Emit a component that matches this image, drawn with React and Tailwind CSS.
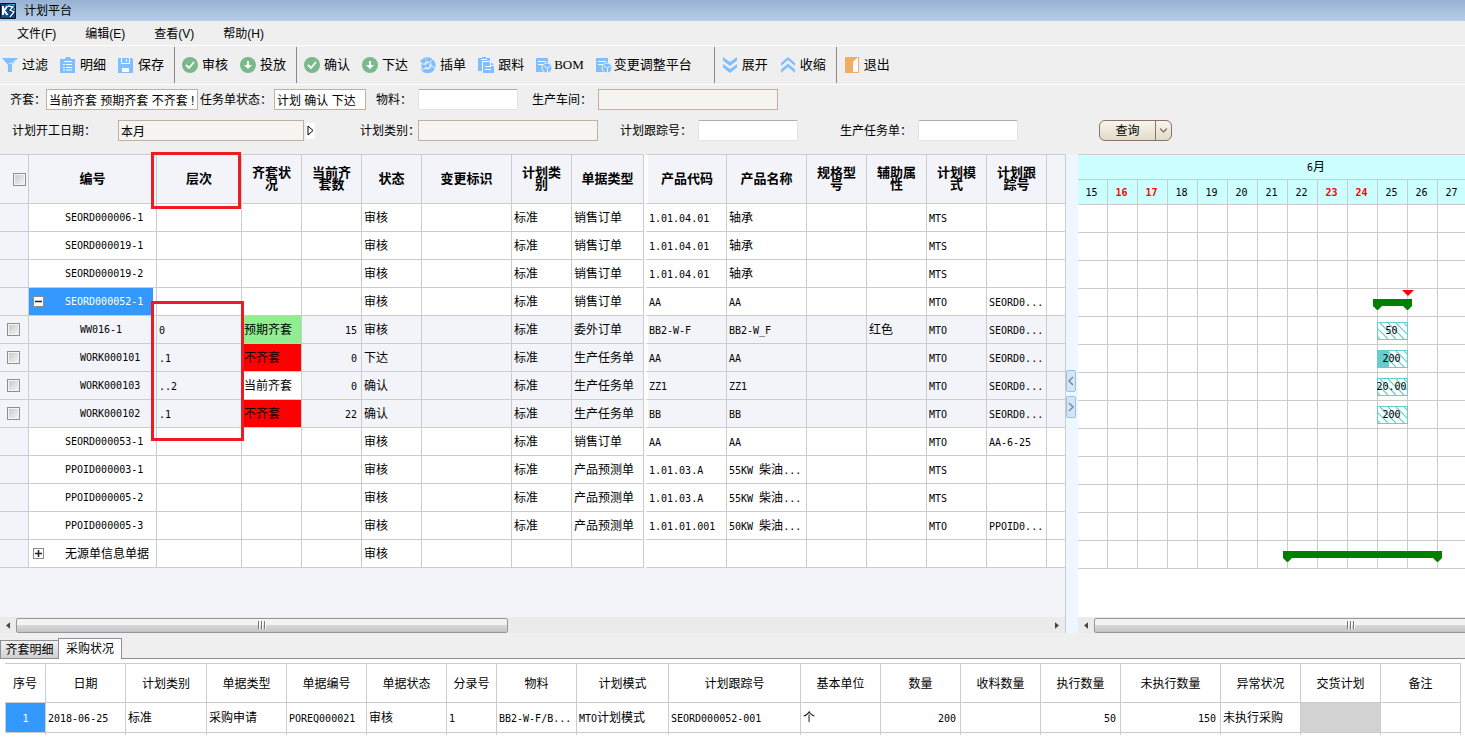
import React, { useState } from "react";
import clsx from "clsx";

const menus = ["文件(F)", "编辑(E)", "查看(V)", "帮助(H)"];

const planColumns = [
  { title: "层次", width: "w-[85px]" },
  { title: "齐套状况", width: "w-[60px]" },
  { title: "当前齐套数", width: "w-[60px]" },
  { title: "状态", width: "w-[60px]" },
  { title: "变更标识", width: "w-[90px]" },
  { title: "计划类别", width: "w-[60px]" },
  { title: "单据类型", width: "w-[72px]" },
  { title: "产品代码", width: "w-[83px]" },
  { title: "产品名称", width: "w-[80px]" },
  { title: "规格型号", width: "w-[60px]" },
  { title: "辅助属性", width: "w-[60px]" },
  { title: "计划模式", width: "w-[60px]" },
  { title: "计划跟踪号", width: "w-[60px]" },
  { title: "", width: "" },
];

// cells follow the order of planColumns
const planRows = [
  { id: "SEORD000006-1", cells: ["", "", "", "审核", "", "标准", "销售订单", "1.01.04.01", "轴承", "", "", "MTS", "", ""] },
  { id: "SEORD000019-1", cells: ["", "", "", "审核", "", "标准", "销售订单", "1.01.04.01", "轴承", "", "", "MTS", "", ""] },
  { id: "SEORD000019-2", cells: ["", "", "", "审核", "", "标准", "销售订单", "1.01.04.01", "轴承", "", "", "MTS", "", ""] },
  { id: "SEORD000052-1", toggle: "minus", selected: true, cells: ["", "", "", "审核", "", "标准", "销售订单", "AA", "AA", "", "", "MTO", "SEORD0...", ""] },
  { id: "WW016-1", child: true, kit: "bg-[#90ee90]", cells: ["0", "预期齐套", "15", "审核", "", "标准", "委外订单", "BB2-W-F", "BB2-W_F", "", "红色", "MTO", "SEORD0...", ""] },
  { id: "WORK000101", child: true, kit: "bg-[#ff0000]", cells: [".1", "不齐套", "0", "下达", "", "标准", "生产任务单", "AA", "AA", "", "", "MTO", "SEORD0...", ""] },
  { id: "WORK000103", child: true, kit: "bg-white", cells: ["..2", "当前齐套", "0", "确认", "", "标准", "生产任务单", "ZZ1", "ZZ1", "", "", "MTO", "SEORD0...", ""] },
  { id: "WORK000102", child: true, kit: "bg-[#ff0000]", cells: [".1", "不齐套", "22", "确认", "", "标准", "生产任务单", "BB", "BB", "", "", "MTO", "SEORD0...", ""] },
  { id: "SEORD000053-1", cells: ["", "", "", "审核", "", "标准", "销售订单", "AA", "AA", "", "", "MTO", "AA-6-25", ""] },
  { id: "PPOID000003-1", cells: ["", "", "", "审核", "", "标准", "产品预测单", "1.01.03.A", "55KW 柴油...", "", "", "MTS", "", ""] },
  { id: "PPOID000005-2", cells: ["", "", "", "审核", "", "标准", "产品预测单", "1.01.03.A", "55KW 柴油...", "", "", "MTS", "", ""] },
  { id: "PPOID000005-3", cells: ["", "", "", "审核", "", "标准", "产品预测单", "1.01.01.001", "50KW 柴油...", "", "", "MTO", "PPOID0...", ""] },
  { id: "无源单信息单据", toggle: "plus", cells: ["", "", "", "审核", "", "", "", "", "", "", "", "", "", ""] },
];

const days = [15, 16, 17, 18, 19, 20, 21, 22, 23, 24, 25, 26, 27];
const weekend = [16, 17, 23, 24];

const purchaseColumns = [
  { title: "序号", width: "w-[41px]", value: "1" },
  { title: "日期", width: "w-[80px]", value: "2018-06-25" },
  { title: "计划类别", width: "w-[81px]", value: "标准" },
  { title: "单据类型", width: "w-[80px]", value: "采购申请" },
  { title: "单据编号", width: "w-[80px]", value: "POREQ000021" },
  { title: "单据状态", width: "w-[80px]", value: "审核" },
  { title: "分录号", width: "w-[50px]", value: "1" },
  { title: "物料", width: "w-[80px]", value: "BB2-W-F/B..." },
  { title: "计划模式", width: "w-[92px]", value: "MTO计划模式" },
  { title: "计划跟踪号", width: "w-[132px]", value: "SEORD000052-001" },
  { title: "基本单位", width: "w-[80px]", value: "个" },
  { title: "数量", width: "w-[80px]", value: "200", right: true },
  { title: "收料数量", width: "w-[80px]", value: "" },
  { title: "执行数量", width: "w-[80px]", value: "50", right: true },
  { title: "未执行数量", width: "w-[100px]", value: "150", right: true },
  { title: "异常状况", width: "w-[80px]", value: "未执行采购" },
  { title: "交货计划", width: "w-[80px]", value: "", disabled: true },
  { title: "备注", width: "w-[80px]", value: "" },
];

// Latin runs are set in a 6px-wide mono face beside the 12px Chinese text
function Txt({ children }) {
  return String(children)
    .split(/([\x20-\x7e]+)/)
    .filter(Boolean)
    .map((part, i) =>
      /^[\x20-\x7e]+$/.test(part) ? (
        <span key={i} className="font-['DejaVu_Sans_Mono',monospace] text-[10px] whitespace-pre">
          {part}
        </span>
      ) : (
        part
      )
    );
}

function Logo() {
  return (
    <svg width="16" height="16" viewBox="0 0 16 16" aria-hidden="true">
      <rect width="16" height="16" rx="1" fill="#0a0a1e" />
      <rect x="1" y="1" width="14" height="14" fill="#0b4f8c" />
      <path d="M7 1h8v9z" fill="#29a9e0" />
      <path d="M3 3v9M7.500 3L4 7.500 7.500 12" stroke="#fff" strokeWidth="2" fill="none" />
      <path d="M8 3l5 1-3 3 4 2-4 5" stroke="#062a55" strokeWidth="3.200" fill="none" />
      <path d="M8 3l5 1-3 3 4 2-4 5" stroke="#fff" strokeWidth="1.300" fill="none" />
    </svg>
  );
}

const blue = "#80bfff";
const green = "#7ab98b";

const icons = {
  filter: (
    <>
      <path d="M0 1h16L10 8v7H6V8z" fill={blue} />
      <path d="M14 3l-5 4-2-1" stroke="#efefef" fill="none" />
    </>
  ),
  detail: (
    <>
      <path d="M0 2h5V1h1V0h4v1h1v1h4v14H0z" fill={blue} />
      <path d="M4 4.500h8M3 7.500h2M6 7.500h6M3 10.500h2M6 10.500h6M3 13h2M6 13h6" stroke="#fff" />
    </>
  ),
  save: (
    <>
      <path d="M0 1h14l1 1v14H0z" fill={blue} />
      <path d="M3.500 1v5.500h8V1M8.500 2v3" stroke="#fff" fill="none" />
      <path d="M4 11h7v4H4z" fill="#fff" />
    </>
  ),
  check: (
    <>
      <circle cx="8" cy="8" r="8" fill={green} />
      <path d="M4 8l3 3 5-6" stroke="#fff" strokeWidth="1.800" fill="none" />
    </>
  ),
  down: (
    <>
      <circle cx="8" cy="8" r="8" fill={green} />
      <path d="M7 4h2v4h3l-4 4-4-4h3z" fill="#fff" />
    </>
  ),
  insert: (
    <>
      <path d="M6 2.500a6 6 0 1 1-3.500 9" stroke={blue} strokeWidth="4" fill="none" />
      <path d="M0 4l5-4 1 5-3 2zM1 6l5 1 4-2-1 6-3-1-4 2z" fill={blue} />
      <path d="M0 6.500l6 1M6 10.500l-4 3M10 5l3-3M12 9l3 2" stroke="#efefef" />
    </>
  ),
  follow: (
    <>
      <path d="M0 1h4V0h4v1h4v3H5v10H0z" fill={blue} />
      <path d="M3 2.500h6M4.500 15V4.500H12" stroke="#fff" fill="none" />
      <path d="M5 5h8l3 3v8H5z" fill={blue} />
      <path d="M12.500 5v3.500H16M7 9.500h6M7 12.500h6" stroke="#fff" fill="none" />
    </>
  ),
  bom: (
    <>
      <path d="M0 1h12v12H9v2H0z" fill={blue} />
      <path d="M2 4.500h8M2 7.500h5" stroke="#fff" />
      <circle cx="11" cy="11" r="5" fill={blue} stroke="#efefef" />
      <path d="M8 9l3.500 2v5M11.500 11l3-2" stroke="#efefef" fill="none" />
    </>
  ),
  expand: (
    <path d="M1 0l7 5 7-5v3.500L8 9 1 3.500zM1 7l7 5 7-5v3.500L8 16l-7-5.500z" fill={blue} />
  ),
  collapse: (
    <path d="M1 9l7-6 7 6V6L8 0 1 6zM1 16l7-6 7 6v-3.500L8 6.500l-7 6z" fill={blue} />
  ),
  exit: (
    <>
      <path d="M1 0h14v16H1z" fill="#f0ac62" />
      <path d="M9 5l4-4h1v14H9z" fill="#fff" />
    </>
  ),
};

function Tool({ icon, label, serif }) {
  return (
    <button
      type="button"
      className={clsx("flex items-center text-[13px] leading-4 whitespace-nowrap", icon === "bom" ? "gap-0.5" : "gap-1")}
    >
      <svg width="16" height="16" viewBox="0 0 16 16" aria-hidden="true">
        {icons[icon]}
      </svg>
      <span className={clsx(serif && "font-['Liberation_Serif',serif]")}>{label}</span>
    </button>
  );
}

const Separator = () => <div className="h-9 w-px bg-[#8a8a8a]" />;

function Field({ id, label, labelWidth, width, value = "", look = "plain" }) {
  return (
    <div className="flex items-center">
      <label htmlFor={id} className={clsx("whitespace-nowrap", labelWidth)}>
        {label}
      </label>
      <input
        id={id}
        type="text"
        defaultValue={value}
        className={clsx(
          "h-[21px] border px-0.5 outline-none",
          width,
          look === "plain" && "rounded-xs border-[#e2e3ea] border-t-[#abadb3] bg-white",
          look === "pick" && "border-[#bfb0a3] bg-white",
          look === "locked" && "border-[#bfb0a3] bg-[#f6f4f0]"
        )}
      />
    </div>
  );
}

function Tick({ label }) {
  return (
    <input
      type="checkbox"
      aria-label={label}
      className="block size-[13px] appearance-none border border-[#8e8f8f] bg-linear-to-br from-[#c4c8cd] to-[#f6f6f6] shadow-[inset_0_0_0_1px_#f4f4f4] checked:bg-[#3399ff]"
    />
  );
}

function Toggle({ kind }) {
  return (
    <button
      type="button"
      aria-label={kind === "minus" ? "收缩" : "展开"}
      className="mr-[21px] ml-1 size-[11px] shrink-0 border border-[#8a8a8a] bg-white"
    >
      <svg width="9" height="9" viewBox="0 0 9 9" aria-hidden="true" className="block">
        <path d={kind === "minus" ? "M1 4.500h7" : "M1 4.500h7M4.500 1v7"} stroke="#222" strokeWidth="1.500" />
      </svg>
    </button>
  );
}

function Arrow({ dir }) {
  return (
    <button type="button" aria-label={dir === "left" ? "向左" : "向右"} className="flex h-4 w-4 shrink-0 items-center justify-center">
      <svg width="4" height="7" viewBox="0 0 5 8" aria-hidden="true">
        <path d={dir === "left" ? "M5 0v8L0 4z" : "M0 0v8l5-4z"} fill="#444" />
      </svg>
    </button>
  );
}

function Thumb({ width }) {
  return (
    <div
      className={clsx(
        "flex h-[15px] shrink-0 items-center justify-center gap-px rounded-xs border border-[#979797] bg-linear-to-b from-[#f3f3f3] from-45% via-[#d6d7d9] via-50% to-[#c3c5c8]",
        width
      )}
    >
      <i className="h-2 w-0.5 border-r border-white bg-[#777]" />
      <i className="h-2 w-0.5 border-r border-white bg-[#777]" />
      <i className="h-2 w-0.5 border-r border-white bg-[#777]" />
    </div>
  );
}

function PlanTable() {
  return (
    <table className="w-full table-fixed border-separate border-spacing-0">
      <colgroup>
        <col className="w-[29px]" />
        <col className="w-[128px]" />
        {planColumns.map((col, i) => (
          <col key={i} className={col.width} />
        ))}
      </colgroup>
      <thead>
        <tr className="h-[50px] text-[13px] leading-3">
          <th className="border-y border-r border-[#ccc] p-0 pl-[13px]">
            <Tick label="全选" />
          </th>
          <th className="border-y border-r border-[#ccc] p-0">编号</th>
          {planColumns.map((col, i) => (
            <th
              key={i}
              className={clsx(
                "border-y border-r border-[#ccc] px-2 py-0 font-bold last:border-r-0",
                col.title === "产品代码" && "border-l-4 border-l-white"
              )}
            >
              {col.title}
            </th>
          ))}
        </tr>
      </thead>
      <tbody>
        {planRows.map((row) => (
          <tr key={row.id} className={clsx("h-7", !row.child && "bg-white")}>
            <td className="border-r border-b border-[#ccc] bg-[#f3f4f9] p-0 pl-[7px]">
              {row.child && <Tick label={row.id} />}
            </td>
            <td className="border-r border-b border-[#ccc] p-0 pr-[3px]">
              <div
                className={clsx(
                  "flex h-[27px] items-center whitespace-nowrap",
                  row.selected && "bg-[#3399ff] text-white",
                  !row.toggle && (row.child ? "pl-[51px]" : "pl-9")
                )}
              >
                {row.toggle && <Toggle kind={row.toggle} />}
                <span>
                  <Txt>{row.id}</Txt>
                </span>
              </div>
            </td>
            {row.cells.map((cell, i) => (
              <td
                key={i}
                className={clsx(
                  "overflow-hidden border-r border-b border-[#ccc] pt-px pb-0 whitespace-nowrap last:border-r-0",
                  i === 1 && row.kit,
                  i === 2 ? "pr-1 text-right" : "pr-0",
                  i === 7 ? "border-l-4 border-l-white pl-px" : "pl-0.5"
                )}
              >
                <Txt>{cell}</Txt>
              </td>
            ))}
          </tr>
        ))}
      </tbody>
    </table>
  );
}

// summary bar with a pointed foot at both ends
function SummaryBar({ width, className }) {
  return (
    <svg width={width} height="11" className={clsx("absolute", className)} aria-hidden="true">
      <path d={`M0 0h${width}v7l-4 4h-1l-4-4H9l-4 4H4L0 7z`} fill="#008000" />
    </svg>
  );
}

function TaskBar({ top, done, children }) {
  return (
    <div
      className={clsx(
        "absolute left-[299px] flex h-[18px] w-[31px] items-center justify-center border border-[#66cccc] bg-white pr-0.5 pb-0.5",
        top
      )}
    >
      <svg width="29" height="16" className="absolute inset-0" aria-hidden="true">
        <path d="M-14 0l16 16M-6 0l16 16M2 0l16 16M10 0l16 16M18 0l16 16M26 0l16 16" stroke="#66cccc" strokeWidth="1.200" />
        {done && <rect width="11" height="16" fill="#66cccc" />}
      </svg>
      <span className="relative">
        <Txt>{children}</Txt>
      </span>
    </div>
  );
}

function Gantt() {
  return (
    <div className="relative">
      <table className="w-[390px] table-fixed border-separate border-spacing-0">
        <thead>
          <tr className="h-[26px] bg-[#ccffff]">
            <th colSpan={13} className="border-y border-[#ccc] p-0 pl-[86px] font-normal">
              <Txt>6月</Txt>
            </th>
          </tr>
          <tr className="h-[25px] bg-[#ccffff]">
            {days.map((day) => (
              <th
                key={day}
                className={clsx(
                  "border-r border-b border-[#ccc] p-0 pr-0.5",
                  weekend.includes(day) ? "font-bold text-[#ff0000]" : "font-normal"
                )}
              >
                <Txt>{day}</Txt>
              </th>
            ))}
          </tr>
        </thead>
        <tbody>
          {planRows.map((row) => (
            <tr key={row.id} className="h-7">
              {days.map((day) => (
                <td key={day} className="border-r border-b border-[#ccc] p-0" />
              ))}
            </tr>
          ))}
        </tbody>
      </table>
      <svg width="12" height="6" className="absolute top-[136px] left-[324px]" aria-hidden="true">
        <path d="M0 0h12L6 6z" fill="#ff0000" />
      </svg>
      <SummaryBar width={39} className="top-[145px] left-[295px]" />
      <TaskBar top="top-[168px]">50</TaskBar>
      <TaskBar top="top-[196px]" done>200</TaskBar>
      <TaskBar top="top-[224px]">20.00</TaskBar>
      <TaskBar top="top-[252px]">200</TaskBar>
      <SummaryBar width={159} className="top-[397px] left-[205px]" />
    </div>
  );
}

function Splitter() {
  return (
    <div className="flex w-3 shrink-0 flex-col items-start gap-1 bg-[#eef6ff] pt-[216px]">
      {["M6 2L2 6l4 4", "M2 2l4 4-4 4"].map((d, i) => (
        <button
          key={d}
          type="button"
          aria-label={i === 0 ? "收起左侧" : "收起右侧"}
          className="flex h-[22px] w-2.5 items-center justify-center rounded-xs border border-[#99c2e8] bg-[#cfe6fb]"
        >
          <svg width="8" height="12" viewBox="0 0 8 12" className="shrink-0" aria-hidden="true">
            <path d={d} stroke="#888" strokeWidth="1.500" fill="none" />
          </svg>
        </button>
      ))}
    </div>
  );
}

function PurchaseTable() {
  return (
    <table className="w-full table-fixed border-separate border-spacing-0">
      <colgroup>
        {purchaseColumns.map((col) => (
          <col key={col.title} className={col.width} />
        ))}
      </colgroup>
      <thead>
        <tr className="h-10">
          {purchaseColumns.map((col) => (
            <th key={col.title} className="border-y border-r border-[#ccc] p-0 pt-px font-normal whitespace-nowrap">
              {col.title}
            </th>
          ))}
        </tr>
      </thead>
      <tbody>
        <tr className="h-[30px]">
          {purchaseColumns.map((col, i) => (
            <td
              key={col.title}
              className={clsx(
                "overflow-hidden border-r border-b border-[#ccc] pt-px pb-0 whitespace-nowrap",
                i === 0 && "border-l bg-[#3399ff] text-center text-white",
                i > 0 && (col.right ? "pr-1 text-right" : "pr-0 pl-0.5"),
                col.disabled && "bg-[#d2d2d2]"
              )}
            >
              <Txt>{col.value}</Txt>
            </td>
          ))}
        </tr>
        <tr className="h-0.5">
          {purchaseColumns.map((col) => (
            <td key={col.title} className="border-r border-[#ccc] p-0" />
          ))}
        </tr>
      </tbody>
    </table>
  );
}

function App() {
  const [tab, setTab] = useState("采购状况");

  return (
    <div className="flex min-h-screen flex-col overflow-hidden bg-[#efefef] font-['Liberation_Sans','Noto_Sans_CJK_SC',sans-serif] text-xs leading-4 text-black">
      {/* Title bar */}
      <header className="flex h-[21px] items-center gap-2 bg-linear-to-b from-[#97b2d2] to-[#b6cee8]">
        <Logo />
        <h1>计划平台</h1>
      </header>

      {/* Menu */}
      <nav className="flex h-6 items-center gap-[29px] pt-0.5 pl-[17px]">
        {menus.map((item) => (
          <button key={item} type="button">
            {item}
          </button>
        ))}
      </nav>

      {/* Toolbar */}
      <div className="flex h-10 items-center border-y border-white pl-0.5">
        <div className="flex gap-3 pr-2.5">
          <Tool icon="filter" label="过滤" />
          <Tool icon="detail" label="明细" />
          <Tool icon="save" label="保存" />
        </div>
        <Separator />
        <div className="flex gap-3 pr-2.5 pl-[7px]">
          <Tool icon="check" label="审核" />
          <Tool icon="down" label="投放" />
        </div>
        <Separator />
        <div className="flex gap-3 pr-[22px] pl-[7px]">
          <Tool icon="check" label="确认" />
          <Tool icon="down" label="下达" />
          <Tool icon="insert" label="插单" />
          <Tool icon="follow" label="跟料" />
          <Tool icon="bom" label="BOM" serif />
          <Tool icon="bom" label="变更调整平台" />
        </div>
        <Separator />
        <div className="flex gap-3 pr-2.5 pl-[7px]">
          <Tool icon="expand" label="展开" />
          <Tool icon="collapse" label="收缩" />
        </div>
        <Separator />
        <div className="pl-[7px]">
          <Tool icon="exit" label="退出" />
        </div>
      </div>

      {/* Filters */}
      <form className="h-[69px]" onSubmit={(e) => e.preventDefault()}>
        <div className="flex pt-1 pl-2.5">
          <Field id="kit" label="齐套：" labelWidth="w-9" width="w-[152px]" look="pick" value="当前齐套 预期齐套 不齐套 !" />
          <div className="ml-0.5">
            <Field id="state" label="任务单状态：" labelWidth="w-[74px]" width="w-[92px]" look="pick" value="计划 确认 下达" />
          </div>
          <div className="ml-2.5">
            <Field id="item" label="物料：" labelWidth="w-[42px]" width="w-[100px]" />
          </div>
          <div className="ml-3.5">
            <Field id="shop" label="生产车间：" labelWidth="w-[66px]" width="w-[180px]" look="locked" />
          </div>
        </div>
        <div className="flex items-center pt-2.5 pl-3">
          <Field id="start" label="计划开工日期：" labelWidth="w-[106px]" width="w-[186px]" look="locked" value="本月" />
          <button type="button" aria-label="选择日期" className="ml-0.5 flex h-4 w-[9px] items-center justify-center bg-white">
            <svg width="7" height="11" viewBox="0 0 7 11" aria-hidden="true">
              <path d="M1 1v9l5-4.500z" fill="none" stroke="#000" />
            </svg>
          </button>
          <div className="ml-[45px]">
            <Field id="kind" label="计划类别：" labelWidth="w-[58px]" width="w-[180px]" look="locked" />
          </div>
          <div className="ml-[22px]">
            <Field id="track" label="计划跟踪号：" labelWidth="w-[78px]" width="w-[100px]" />
          </div>
          <div className="ml-[42px]">
            <Field id="task" label="生产任务单：" labelWidth="w-[78px]" width="w-[100px]" />
          </div>
          <div className="ml-[81px] flex h-[21px] w-[73px] overflow-hidden rounded-md border border-[#8b7365] bg-linear-to-b from-[#f8f6ee] to-[#e2dac6]">
            <button type="submit" className="flex-1 border-r border-[#8b7365]">
              查询
            </button>
            <button type="button" aria-label="更多" className="flex w-[15px] items-center justify-center">
              <svg width="7" height="5" viewBox="0 0 7 5" aria-hidden="true">
                <path d="M0 0.500l3.500 3.500L7 0.500" fill="none" stroke="#8b7365" strokeWidth="1.300" />
              </svg>
            </button>
          </div>
        </div>
      </form>

      {/* Plan grid and gantt */}
      <main className="flex grow">
        <section className="relative flex w-[1066px] shrink-0 flex-col border-r border-[#ccc] bg-[#f3f4f9]">
          <PlanTable />
          <div className="absolute -top-0.5 left-[151px] h-[57px] w-[90px] border-3 border-[#ed1c24]" />
          <div className="absolute top-[147px] left-[151px] h-[140px] w-[93px] border-3 border-[#ed1c24]" />
          <div className="mt-auto flex h-4 items-center bg-[#ebebeb]">
            <Arrow dir="left" />
            <div className="flex-1">
              <Thumb width="w-[492px]" />
            </div>
            <Arrow dir="right" />
          </div>
        </section>
        <Splitter />
        <section className="flex min-w-0 flex-1 flex-col overflow-hidden bg-white">
          <Gantt />
          <div className="mt-auto flex h-4 items-center bg-[#ebebeb]">
            <Arrow dir="left" />
            <Thumb width="w-[514px]" />
          </div>
        </section>
      </main>

      {/* Bottom tabs */}
      <section>
        <div className="flex h-[26px] items-end border-b border-[#8c8e98]" role="tablist">
          {["齐套明细", "采购状况"].map((name) => (
            <button
              key={name}
              type="button"
              role="tab"
              aria-selected={tab === name}
              onClick={() => setTab(name)}
              className={clsx(
                "border border-b-0 border-[#8c8e98]",
                tab === name
                  ? "-mb-px h-[21px] w-16 bg-white pb-px"
                  : "-mr-px h-[18px] w-[59px] bg-linear-to-b from-[#f2f2f2] to-[#d0d0d0]"
              )}
            >
              {name}
            </button>
          ))}
        </div>
        <div className="bg-white pt-1 pr-1 pb-[3px] pl-[5px]">
          <PurchaseTable />
        </div>
      </section>
    </div>
  );
}

export default App;
